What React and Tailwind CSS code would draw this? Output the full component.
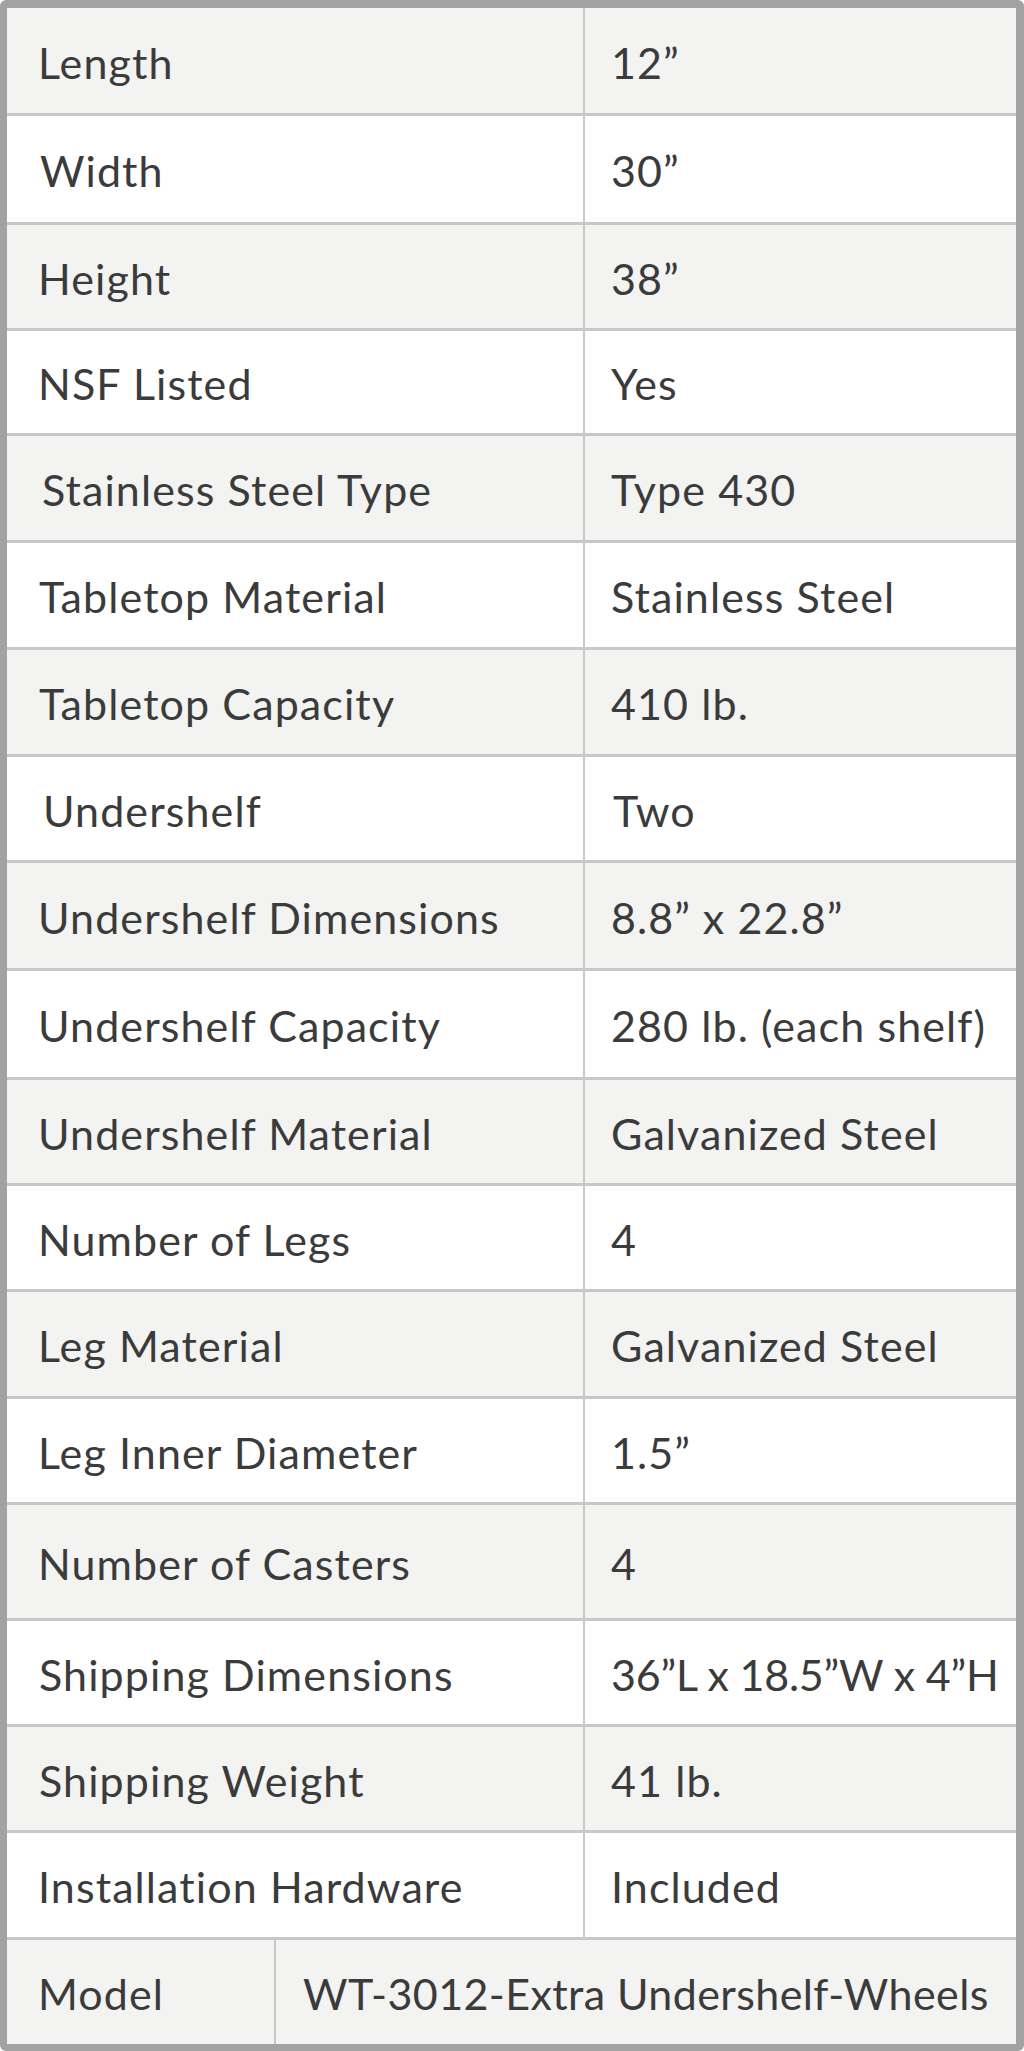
import React from 'react';

// Spec sheet table — two columns, alternating row shading, last row spans a wider value cell.
const rows = [
  { label: 'Length', value: '12”', h: 'h-[108px]', pl: 'pl-[31px]' },
  { label: 'Width', value: '30”', h: 'h-[109px]', pl: 'pl-[33px]' },
  { label: 'Height', value: '38”', h: 'h-[106px]', pl: 'pl-[31px]' },
  { label: 'NSF Listed', value: 'Yes', h: 'h-[105px]', pl: 'pl-[31px]' },
  { label: 'Stainless Steel Type', value: 'Type 430', h: 'h-[107px]', pl: 'pl-[35px]' },
  { label: 'Tabletop Material', value: 'Stainless Steel', h: 'h-[107px]', pl: 'pl-[32px]' },
  { label: 'Tabletop Capacity', value: '410 lb.', h: 'h-[107px]', pl: 'pl-[32px]' },
  { label: 'Undershelf', value: 'Two', h: 'h-[106px]', pl: 'pl-[36px]', vpl: 'pl-[28px]' },
  { label: 'Undershelf Dimensions', value: '8.8” x 22.8”', h: 'h-[108px]', pl: 'pl-[31px]' },
  { label: 'Undershelf Capacity', value: '280 lb. (each shelf)', h: 'h-[109px]', pl: 'pl-[31px]' },
  { label: 'Undershelf Material', value: 'Galvanized Steel', h: 'h-[106px]', pl: 'pl-[31px]' },
  { label: 'Number of Legs', value: '4', h: 'h-[106px]', pl: 'pl-[31px]' },
  { label: 'Leg Material', value: 'Galvanized Steel', h: 'h-[107px]', pl: 'pl-[31px]' },
  { label: 'Leg Inner Diameter', value: '1.5”', h: 'h-[106px]', pl: 'pl-[31px]' },
  { label: 'Number of Casters', value: '4', h: 'h-[116px]', pl: 'pl-[31px]' },
  { label: 'Shipping Dimensions', value: '36”L x 18.5”W x 4”H', h: 'h-[106px]', pl: 'pl-[32px]', vt: 'tracking-[-0.2px]' },
  { label: 'Shipping Weight', value: '41 lb.', h: 'h-[106px]', pl: 'pl-[32px]' },
  { label: 'Installation Hardware', value: 'Included', h: 'h-[107px]', pl: 'pl-[31px]' },
];

export default function App() {
  return (
    <div className="w-[1024px] h-[2051px] bg-white" style={{ fontFamily: 'Lato, "Open Sans", sans-serif' }}>
      <div className="flex h-full flex-col overflow-hidden whitespace-nowrap rounded-[6px] border-t-[8px] border-r-[8px] border-b-[7px] border-l-[7px] border-[#a2a2a2] text-[43px] tracking-[1.1px] text-[#3b3b3b]">
        {rows.map((r, i) => (
          <div
            key={r.label}
            className={`flex ${r.h} border-b-[3px] border-[#c8c8c8] ${i % 2 === 0 ? 'bg-[#f3f3f2]' : 'bg-white'}`}
          >
            <div className={`flex w-[578px] items-center border-r-2 border-[#c8c8c8] pt-[5px] ${r.pl}`}>{r.label}</div>
            <div className={`flex min-w-0 flex-1 items-center pt-[5px] ${r.vpl || 'pl-[26px]'} ${r.vt || ''}`}>{r.value}</div>
          </div>
        ))}
        <div className="flex flex-1 bg-[#f3f3f2]">
          <div className="flex w-[269px] items-center border-r-2 border-[#c8c8c8] pt-[5px] pl-[31px]">Model</div>
          <div className="flex flex-1 items-center pt-[5px] pl-[27px] tracking-[0.4px]">WT-3012-Extra Undershelf-Wheels</div>
        </div>
      </div>
    </div>
  );
}
